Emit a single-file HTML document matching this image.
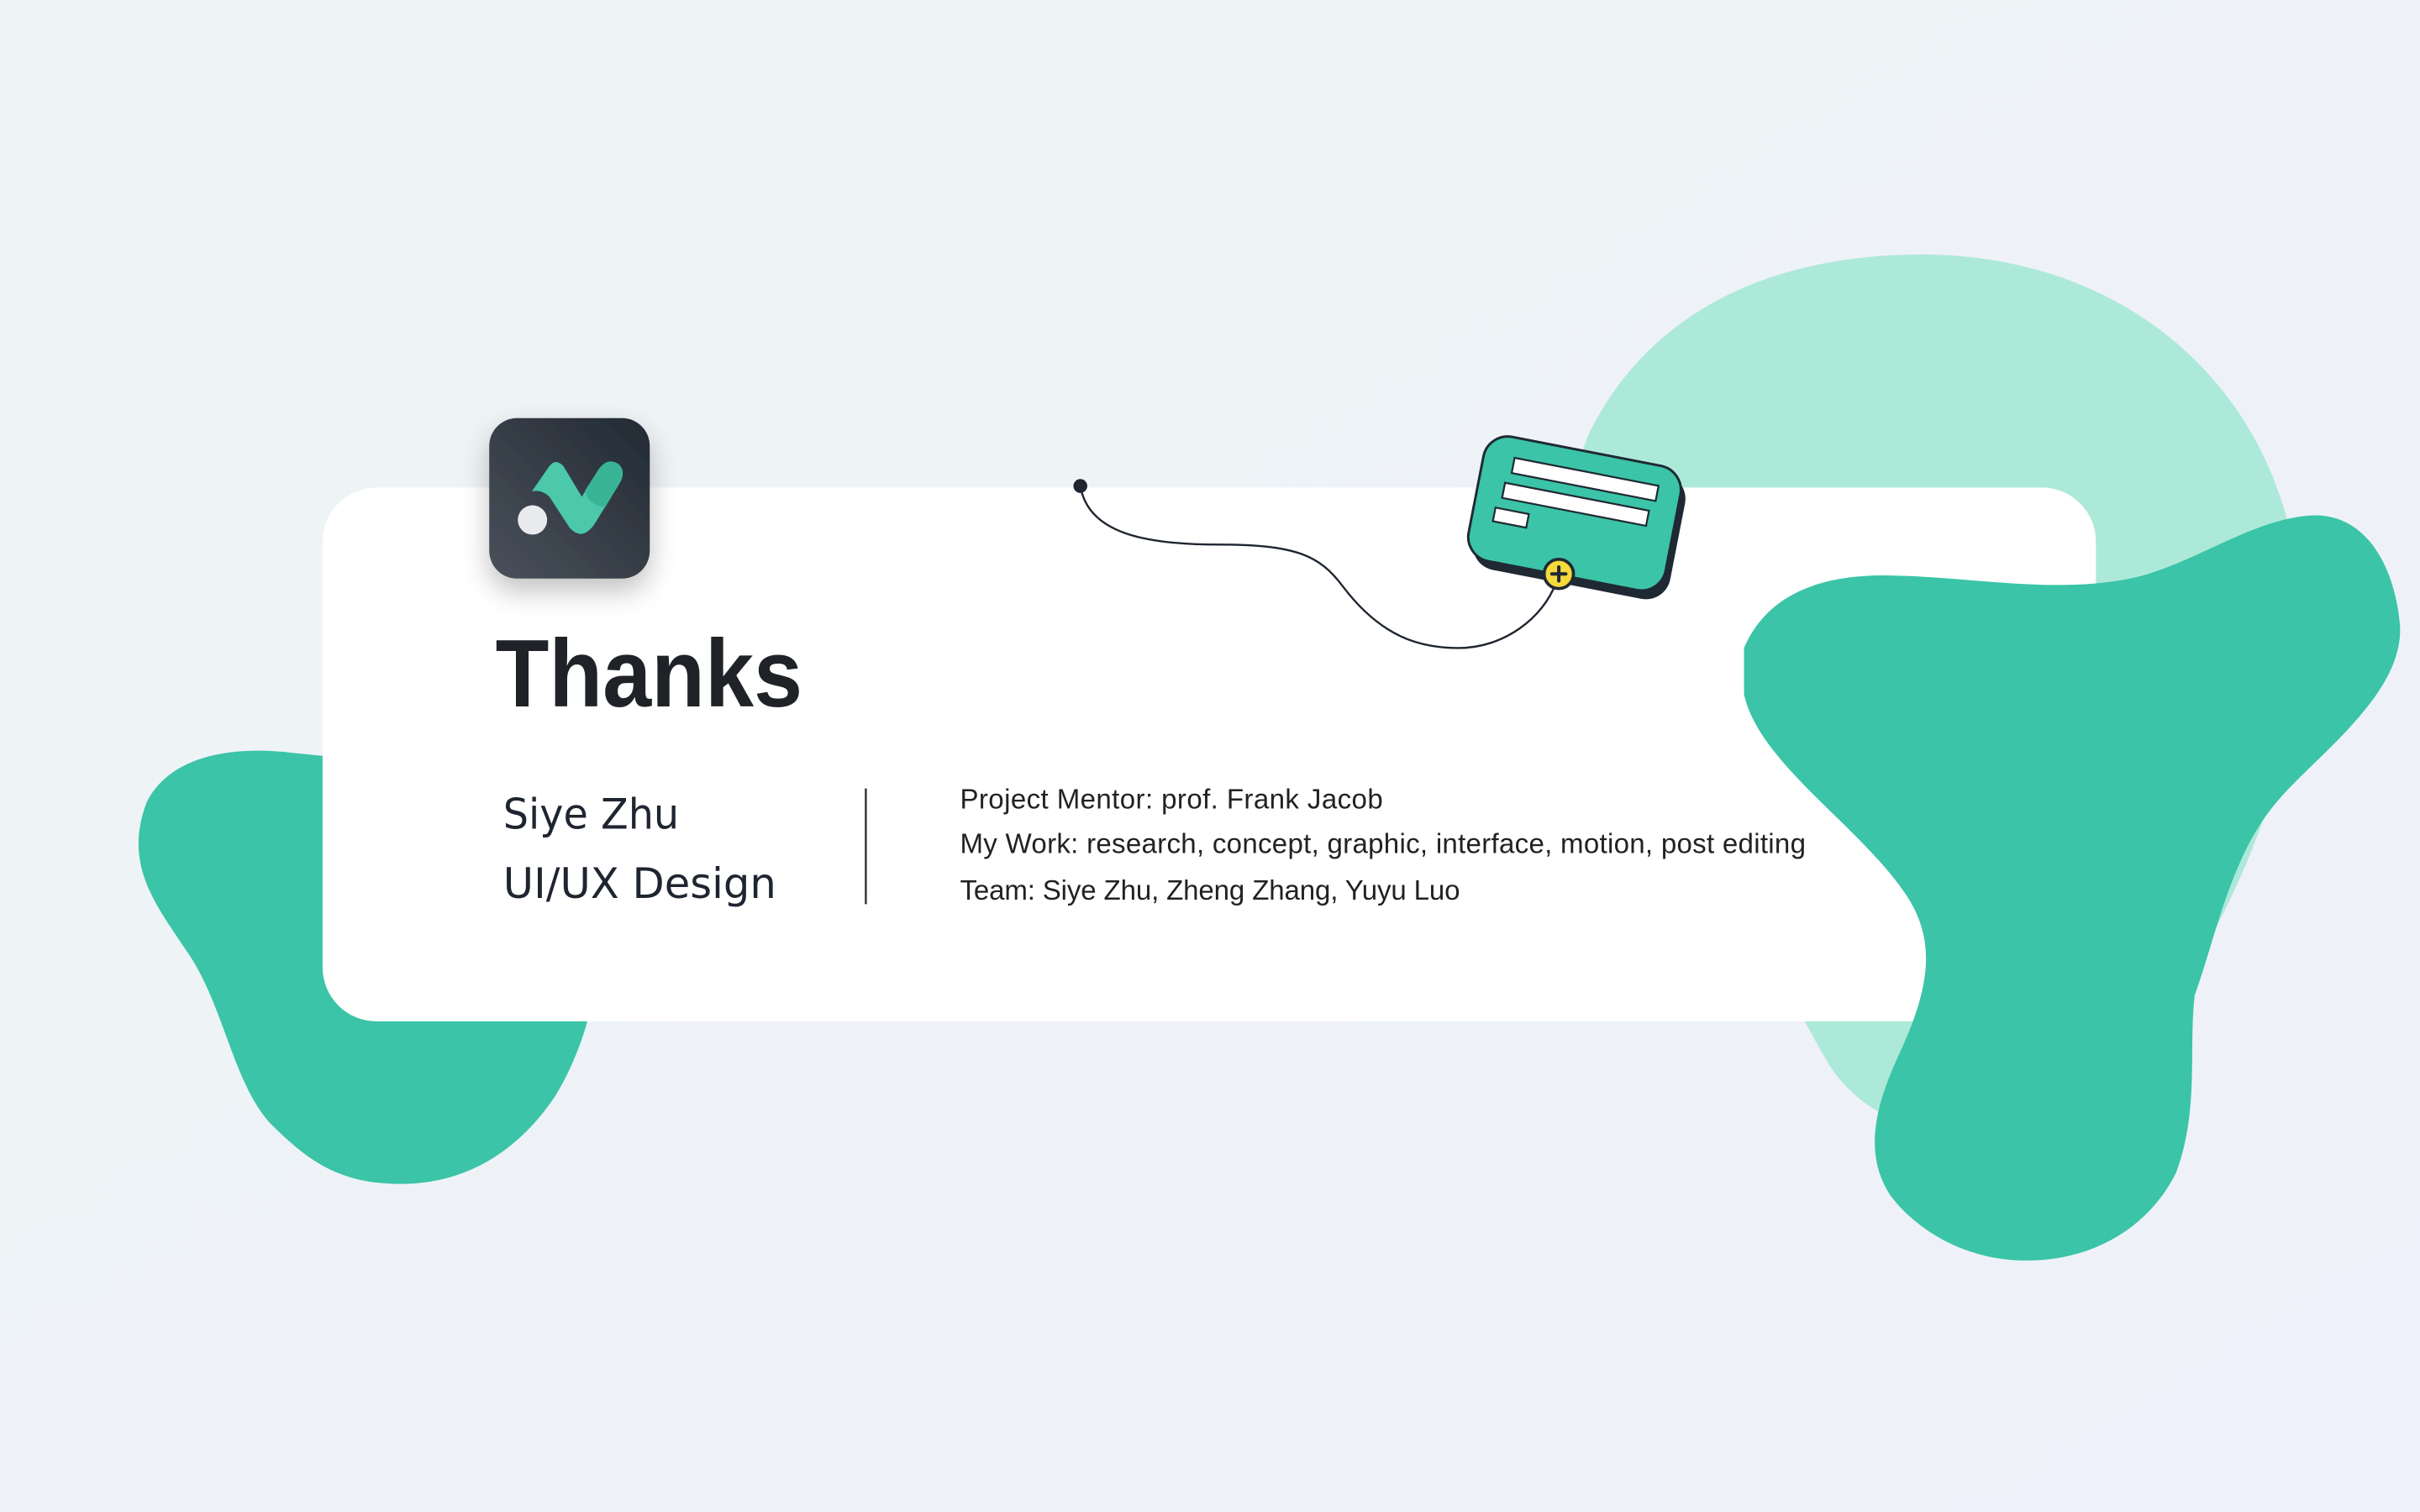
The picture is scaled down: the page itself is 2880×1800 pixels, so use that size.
<!DOCTYPE html>
<html><head><meta charset="utf-8"><style>
html,body{margin:0;padding:0;width:2880px;height:1800px;overflow:hidden;background:#eef3f6}
svg{display:block}
</style></head><body>
<svg width="2880" height="1800" viewBox="0 0 1568 980" xmlns="http://www.w3.org/2000/svg">
<defs>
<linearGradient id="bg" x1="0" y1="0" x2="1" y2="1"><stop offset="0" stop-color="#eef4f5"/><stop offset="1" stop-color="#eef1f9"/></linearGradient>
<linearGradient id="lg" x1="1" y1="0" x2="0" y2="1"><stop offset="0" stop-color="#222a34"/><stop offset="1" stop-color="#4a515b"/></linearGradient>
<filter id="sh" x="-50%" y="-50%" width="200%" height="200%"><feGaussianBlur in="SourceAlpha" stdDeviation="9"/><feOffset dy="8"/><feComponentTransfer><feFuncA type="linear" slope="0.25"/></feComponentTransfer><feMerge><feMergeNode/><feMergeNode in="SourceGraphic"/></feMerge></filter>
</defs>
<rect width="1568" height="980" fill="url(#bg)"/>
<path d="M1030,280 C1070,200 1150,165 1245,165 C1360,165 1450,230 1480,330 C1510,430 1470,560 1400,660 C1340,740 1230,760 1185,690 C1150,630 1120,560 1080,500 C1040,440 1000,350 1030,280 Z" fill="#ade9d9"/>
<path d="M95,520 C110,490 150,483 190,488 C260,495 340,500 375,560 C395,600 390,660 360,710 C330,755 290,770 250,767 C215,765 195,748 175,728 C150,700 145,650 120,615 C100,585 80,560 95,520 Z" fill="#3bc4a7"/>
<rect x="209" y="316" width="1149" height="346" rx="35" fill="#ffffff"/>
<path d="M1130,420 C1145,385 1180,372 1225,373 C1280,374 1330,385 1380,375 C1420,367 1460,335 1500,334 C1535,334 1552,370 1555,405 C1558,450 1500,490 1475,520 C1445,555 1435,610 1422,645 C1418,680 1425,720 1410,760 C1390,800 1350,818 1310,817 C1270,816 1240,795 1225,775 C1205,745 1218,710 1232,680 C1250,640 1255,610 1235,580 C1205,535 1140,495 1130,450 Z" fill="#3bc4a7"/>
<g filter="url(#sh)">
<rect x="317" y="271" width="104" height="104" rx="18" fill="url(#lg)"/>
</g>
<circle cx="345" cy="337" r="9.5" fill="#e8eaee"/>
<path d="M344.6,318.5 L356,302 Q360,297 365,302 L377,322 L388,304 Q394,296 401,301 Q406,306 401,314 L385,340 Q377,351 369,342 L356,322 Q351,317 344.6,318.5 Z" fill="#4cc8ab"/>
<path d="M388,304 Q394,296 401,301 Q406,306 401,314 L392,329 Q381,327 379,318 Z" fill="#3ab497"/>
<path d="M700,315 C705,345 740,353 790,353 C840,353 855,360 870,380 C895,413 920,420 945,420 C975,420 1000,400 1008,378" fill="none" stroke="#1f2630" stroke-width="1.3"/>
<circle cx="700" cy="315" r="4.5" fill="#1f2630"/>
<g transform="translate(1021,334) rotate(11)">
<rect x="-62" y="-37" width="130" height="82" rx="16" fill="#1f2933"/>
<rect x="-66" y="-42" width="130" height="82" rx="16" fill="#3bc4a7" stroke="#1f2933" stroke-width="1.6"/>
<rect x="-46" y="-29" width="95" height="10" fill="#fff" stroke="#1f2933" stroke-width="1.2"/>
<rect x="-49" y="-12" width="95" height="10" fill="#fff" stroke="#1f2933" stroke-width="1.2"/>
<rect x="-52" y="5" width="22" height="9" fill="#fff" stroke="#1f2933" stroke-width="1.2"/>
</g>
<circle cx="1010" cy="372" r="9.5" fill="#f6d93a" stroke="#1f2933" stroke-width="2"/>
<path d="M1010,367.5 V376.5 M1005.5,372 H1014.5" stroke="#1f2933" stroke-width="2.2" stroke-linecap="round"/>
<text x="321" y="458" font-family="Liberation Sans, sans-serif" font-weight="bold" font-size="62" fill="#1f2328" textLength="199" lengthAdjust="spacingAndGlyphs">Thanks</text>
<text x="326" y="537" font-family="DejaVu Sans, sans-serif" font-size="27" fill="#1f2530" textLength="114" lengthAdjust="spacingAndGlyphs">Siye Zhu</text>
<text x="326" y="582" font-family="DejaVu Sans, sans-serif" font-size="27" fill="#1f2530" textLength="177" lengthAdjust="spacingAndGlyphs">UI/UX Design</text>
<line x1="561" y1="511" x2="561" y2="586" stroke="#2a3038" stroke-width="1.3"/>
<g font-family="Liberation Sans, sans-serif" font-size="18" fill="#222" lengthAdjust="spacingAndGlyphs">
<text x="622" y="524" textLength="274">Project Mentor: prof. Frank Jacob</text>
<text x="622" y="553" textLength="548">My Work: research, concept, graphic, interface, motion, post editing</text>
<text x="622" y="583" textLength="324">Team: Siye Zhu, Zheng Zhang, Yuyu Luo</text>
</g>
</svg>
</body></html>
